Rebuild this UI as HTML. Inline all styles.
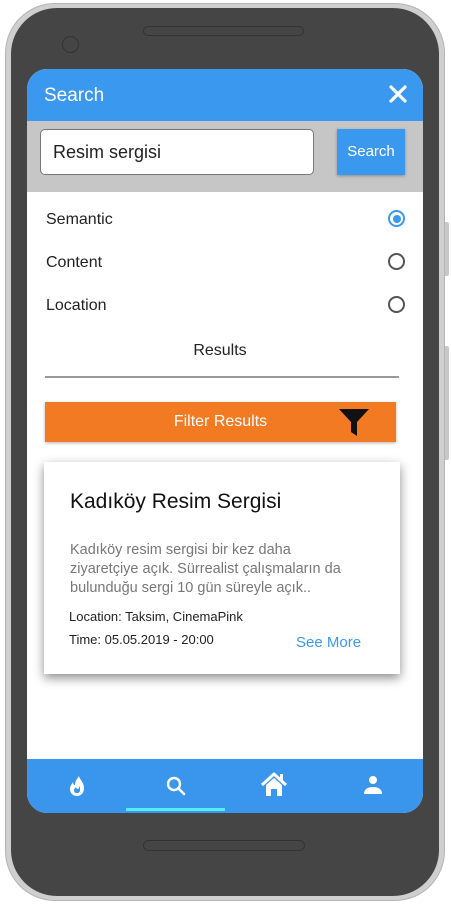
<!DOCTYPE html>
<html><head><style>
*{margin:0;padding:0;box-sizing:border-box}
body{width:451px;height:905px;background:#fff;font-family:"Liberation Sans",sans-serif;position:relative;overflow:hidden}
.abs{position:absolute}
</style></head><body>
<div class="abs" style="left:443px;top:222px;width:6px;height:54px;background:#c8c8c8;border-radius:2px"></div>
<div class="abs" style="left:443px;top:346px;width:6px;height:114px;background:#c8c8c8;border-radius:2px"></div>
<div class="abs" style="left:5px;top:3px;width:440px;height:898px;background:#cfcfcf;border-radius:50px;border:1px solid #b5b5b5"></div>
<div class="abs" style="left:11px;top:8px;width:428px;height:888px;background:#454545;border-radius:46px"></div>
<div class="abs" style="left:143px;top:26px;width:161px;height:10px;border:1px solid #333;border-radius:6px"></div>
<div class="abs" style="left:62px;top:36px;width:17px;height:17px;border:1px solid #333;border-radius:50%"></div>
<div class="abs" style="left:143px;top:840px;width:162px;height:11px;border:1px solid #333;border-radius:6px"></div>

<div class="abs" style="left:27px;top:69px;width:396px;height:744px;background:#fff;border-radius:20px;overflow:hidden">
  <div class="abs" style="left:0;top:0;width:396px;height:52px;background:#3a99ee"></div>
  <div class="abs" style="left:17px;top:16px;color:#fff;font-size:19px">Search</div>
  <svg class="abs" style="left:362px;top:16px" width="18" height="18"><path d="M2 2L16 16M16 2L2 16" stroke="#fff" stroke-width="3.2" stroke-linecap="round"/></svg>
  <div class="abs" style="left:0;top:52px;width:396px;height:71px;background:#c6c6c6"></div>
  <div class="abs" style="left:13px;top:60px;width:274px;height:46px;background:#fff;border:1px solid #777;border-radius:5px;font-size:18px;padding:12px 0 0 12px;color:#222">Resim sergisi</div>
  <div class="abs" style="left:310px;top:60px;width:68px;height:46px;background:#3a99ee;color:#fff;font-size:15px;text-align:center;line-height:46px;box-shadow:0 1px 3px rgba(0,0,0,.3)">Search</div>
  <div class="abs" style="left:19px;top:142px;font-size:16px;color:#222">Semantic</div>
  <div class="abs" style="left:19px;top:185px;font-size:16px;color:#222">Content</div>
  <div class="abs" style="left:19px;top:228px;font-size:16px;color:#222">Location</div>
  <div class="abs" style="left:361px;top:141px;width:17px;height:17px;border:2px solid #3a99ee;border-radius:50%"><div style="margin:2.5px;width:8px;height:8px;border-radius:50%;background:#3a99ee"></div></div>
  <div class="abs" style="left:361px;top:184px;width:17px;height:17px;border:2px solid #555;border-radius:50%"></div>
  <div class="abs" style="left:361px;top:227px;width:17px;height:17px;border:2px solid #555;border-radius:50%"></div>
  <div class="abs" style="left:0;top:273px;width:386px;text-align:center;font-size:16px;color:#222">Results</div>
  <div class="abs" style="left:18px;top:307px;width:354px;height:2px;background:#999"></div>
  <div class="abs" style="left:18px;top:333px;width:351px;height:40px;background:#f27a23;color:#fff;font-size:16px;text-align:center;line-height:40px;box-shadow:0 1px 3px rgba(0,0,0,.3)">Filter Results</div>
  <svg class="abs" style="left:311px;top:338px" width="32" height="30"><path d="M1 2H31L19 15V29L13 25V15Z" fill="#111"/></svg>
  <div class="abs" style="left:17px;top:393px;width:356px;height:212px;background:#fff;box-shadow:0 4px 10px rgba(0,0,0,.45)"></div>
  <div class="abs" style="left:43px;top:421px;font-size:21px;color:#111">Kadıköy Resim Sergisi</div>
  <div class="abs" style="left:43px;top:472px;width:275px;font-size:14.5px;line-height:19px;color:#777">Kadıköy resim sergisi bir kez daha ziyaretçiye açık. Sürrealist çalışmaların da bulunduğu sergi 10 gün süreyle açık..</div>
  <div class="abs" style="left:42px;top:540px;font-size:13px;color:#222">Location: Taksim, CinemaPink</div>
  <div class="abs" style="left:42px;top:563px;font-size:13px;color:#222">Time: 05.05.2019 - 20:00</div>
  <div class="abs" style="left:269px;top:565px;font-size:15px;color:#3a99ee">See More</div>
  <div class="abs" style="left:0;top:690px;width:396px;height:54px;background:#3a95ed"></div>
  <div class="abs" style="left:99px;top:739px;width:99px;height:3px;background:#5ee"></div>
  <svg class="abs" style="left:38px;top:705px" width="24" height="24" viewBox="0 0 24 24"><path d="M12 22c-4 0-7-3-7-7 0-3 2-5 3-7 0 2 1 3 2 3 0-4 2-6 4-9 0 3 5 6 5 12 0 5-3 8-7 8z" fill="#fff"/><path d="M12 19c-2 0-3-1-3-3 0-1 1-2 2-3 0 1 1 2 2 2 1 0 1-2 1-3 1 1 1 2 1 4 0 2-1 3-3 3z" fill="#3a95ed"/></svg>
  <svg class="abs" style="left:137px;top:705px" width="24" height="24" viewBox="0 0 24 24"><circle cx="10" cy="10" r="6" fill="none" stroke="#fff" stroke-width="2.4"/><path d="M14.5 14.5L20 20" stroke="#fff" stroke-width="2.6" stroke-linecap="round"/></svg>
  <svg class="abs" style="left:233px;top:703px" width="28" height="26" viewBox="0 0 28 26"><path d="M2 13L14 2L26 13" fill="none" stroke="#fff" stroke-width="3" stroke-linejoin="round"/><path d="M6 13V24H11V17H17V24H22V13L14 6Z" fill="#fff"/><rect x="20" y="2" width="3" height="7" fill="#fff"/></svg>
  <svg class="abs" style="left:335px;top:705px" width="22" height="22" viewBox="0 0 22 22"><circle cx="11" cy="6" r="4" fill="#fff"/><path d="M2 20c0-5 4-7 9-7s9 2 9 7z" fill="#fff"/></svg>
</div>
</body></html>
